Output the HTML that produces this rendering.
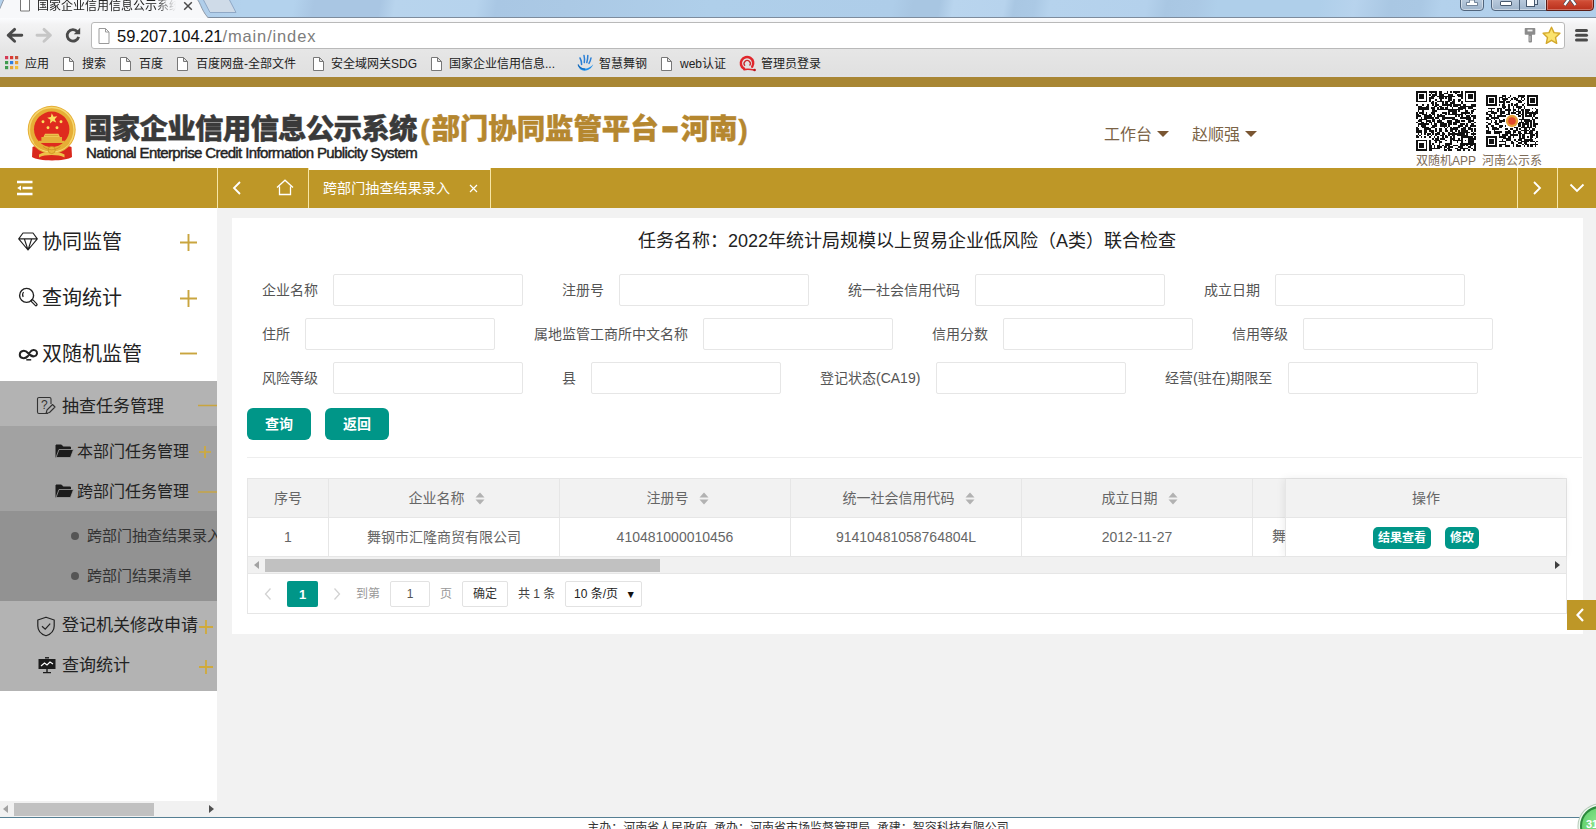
<!DOCTYPE html>
<html lang="zh-CN">
<head>
<meta charset="utf-8">
<title>国家企业信用信息公示系统</title>
<style>
*{box-sizing:border-box;margin:0;padding:0}
html,body{width:1596px;height:829px;overflow:hidden;background:#fff}
body{position:relative;font-family:"Liberation Sans","Noto Sans CJK SC",sans-serif;font-size:14px;color:#333}
.a{position:absolute;white-space:nowrap}
/* ---------- browser chrome ---------- */
#tabbar{left:0;top:0;width:1596px;height:18px;border-bottom:1px solid #7d8c9d;background:linear-gradient(100deg,#b4d1ec 0px,#b0ceea 200px,#b3d2ed 240px,#b3d2ed 290px,#a9c6e3 310px,#a9c6e3 375px,#b8d4ed 390px,#b6d3ed 470px,#a9c7e4 490px,#abc9e5 560px,#afcfea 700px,#aecde9 880px,#a8c6e2 900px,#a8c6e2 926px,#b9d5ee 940px,#b7d3ed 990px,#a9c7e3 1000px,#abc9e5 1020px,#b6d3ed 1035px,#b4d1ec 1130px,#a9c7e3 1150px,#abc9e5 1180px,#afcfea 1200px,#afcfea 1300px,#b7d3ed 1335px,#a9c7e3 1370px,#aac8e4 1400px,#b3d1ec 1420px,#b0ceea 1596px)}
#toolbar{left:0;top:18px;width:1596px;height:32px;background:linear-gradient(#fbfcfe 0%,#f3f3f4 20%,#e6e6e6 100%)}
#bmbar{left:0;top:50px;width:1596px;height:25px;background:linear-gradient(#e6e6e6,#e0e0e0)}
#bmline{left:0;top:75px;width:1596px;height:2px;background:#e1e1e4}
#urlbox{left:91px;top:22px;width:1474px;height:27px;background:#fff;border:1px solid #b9b9b9;border-radius:3px}
.bm{top:52px;height:25px;line-height:25px;font-size:12px;color:#222}
/* ---------- page ---------- */
#goldband{left:0;top:77px;width:1596px;height:10px;background:#a88634}
#header{left:0;top:87px;width:1596px;height:81px;background:#fff}
#nav{left:0;top:168px;width:1596px;height:40px;background:#be9727}
.sep{top:168px;width:1px;height:40px;background:#f7e6a5}
#side{left:0;top:208px;width:217px;height:609px;background:#fff}
#main{left:217px;top:208px;width:1379px;height:609px;background:#f2f2f2}
#card{left:232px;top:218px;width:1351px;height:416px;background:#fff}
.m1{left:42px;font-size:20px;color:#222;height:30px;line-height:30px}
.m2{font-size:17px;color:#222;height:26px;line-height:26px}
.m3{font-size:16px;color:#222;height:26px;line-height:26px}
.m4{font-size:15px;color:#333;height:24px;line-height:24px}
.plus{color:#c9a33c;font-weight:300}
.lbl{font-size:14px;color:#555;height:32px;line-height:32px}
.inp{width:190px;height:32px;border:1px solid #e6e6e6;border-radius:2px;background:#fff}
.btn{height:32px;line-height:32px;width:64px;text-align:center;background:#009688;color:#fff;font-size:14px;font-weight:bold;border-radius:6px}
.th{top:479px;height:39px;line-height:38px;text-align:center;color:#666;font-size:14px;background:#f2f2f2;border-right:1px solid #e6e6e6;border-bottom:1px solid #e6e6e6}
.td{top:518px;height:39px;line-height:39px;text-align:center;color:#666;font-size:14px;background:#fff;border-right:1px solid #e6e6e6;border-bottom:1px solid #e6e6e6;overflow:hidden}
.xs{top:527px;height:22px;line-height:22px;background:#009688;color:#fff;font-size:12px;font-weight:bold;border-radius:5px;text-align:center}
.pp{display:inline-block;font-style:normal;text-align:center;letter-spacing:0;font-family:"Liberation Sans",sans-serif;font-weight:bold}
.pg{top:581px;height:26px;line-height:27px;font-size:12px;color:#333}
</style>
</head>
<body>
<!-- ======= browser chrome ======= -->
<div class="a" id="tabbar"></div>
<div class="a" id="toolbar"></div>
<div class="a" id="bmbar"></div>
<div class="a" id="bmline"></div>
<div class="a" id="urlbox"></div>
<!-- active tab -->
<svg class="a" style="left:0;top:0" width="260" height="18" viewBox="0 0 260 18">
  <path d="M-6 22 L4 -1 L196 -1 C199.5 -1 201 10 207.5 17 L212 22 Z" fill="#f7f8fa" stroke="#8f9aa8" stroke-width="1"/>
  <path d="M203 -1 L229 -1 L236 12.5 L210 12.5 Z" fill="#cfdbe8" stroke="#8fa8c6" stroke-width="1"/>
</svg>
<svg class="a" style="left:19px;top:0" width="12" height="12" viewBox="0 0 12 12"><path d="M1.5 0 V11 H10.5 V0" fill="#fff" stroke="#777" stroke-width="1"/></svg>
<div class="a" style="left:37px;top:-3px;height:18px;line-height:18px;font-size:12px;color:#222;width:139px;overflow:hidden;-webkit-mask-image:linear-gradient(90deg,#000 85%,transparent)">国家企业信用信息公示系统</div>
<svg class="a" style="left:183px;top:1px" width="10" height="10" viewBox="0 0 10 10"><path d="M1.2 1.2 L8.8 8.8 M8.8 1.2 L1.2 8.8" stroke="#4a4a4a" stroke-width="1.5"/></svg>
<!-- window buttons -->
<div class="a" style="left:1460px;top:-6px;width:24px;height:17px;border:1px solid #51657d;border-radius:4px;background:linear-gradient(#c4d3e4,#9fb4cb);box-shadow:inset 0 0 0 1px rgba(255,255,255,.45)"></div>
<svg class="a" style="left:1465px;top:0" width="14" height="7" viewBox="0 0 14 7"><path d="M4.5 0 H9.5 V2.5 H12.5 V5.5 H1.5 V2.5 H4.5 Z" fill="#fff" stroke="#5c6f86" stroke-width=".8"/></svg>
<div class="a" style="left:1491px;top:-6px;width:56px;height:17px;border:1px solid #51657d;border-radius:0 0 0 4px;background:linear-gradient(#c4d3e4,#9fb4cb);box-shadow:inset 0 0 0 1px rgba(255,255,255,.45)"></div>
<div class="a" style="left:1519px;top:-6px;width:1px;height:17px;background:#51657d"></div>
<div class="a" style="left:1500px;top:1px;width:12px;height:5px;background:#fff;border:1px solid #46586e;border-radius:1px"></div>
<div class="a" style="left:1529px;top:-3px;width:9px;height:8px;background:#dfe8f2;border:1px solid #46586e"></div>
<div class="a" style="left:1526px;top:-1px;width:9px;height:8px;background:#fff;border:1.5px solid #46586e"></div>
<div class="a" style="left:1546px;top:-6px;width:48px;height:17px;border:1px solid #5a1d16;border-radius:0 0 4px 0;background:linear-gradient(#e08a76 0%,#cf4a33 45%,#b8301c 100%);box-shadow:inset 0 0 0 1px rgba(255,255,255,.3)"></div>
<svg class="a" style="left:1563px;top:-2px" width="14" height="8" viewBox="0 0 14 8"><path d="M1.5 7 L7 -0.5 L12.5 7 M4 -4 L7 -0.5 L10 -4" stroke="#3d4a5c" stroke-width="3.6" fill="none"/><path d="M1.5 7 L7 -0.5 L12.5 7 M4 -4 L7 -0.5 L10 -4" stroke="#fff" stroke-width="2.2" fill="none"/></svg>
<!-- toolbar -->
<svg class="a" style="left:5px;top:25px" width="22" height="20" viewBox="0 0 22 20"><path d="M3.5 10.3 H16.8 M3.2 10.3 L9.6 4.4 M3.2 10.3 L9.6 16.2" stroke="#4a4a4a" stroke-width="2.9" fill="none" stroke-linecap="round"/></svg>
<svg class="a" style="left:33px;top:25px" width="22" height="20" viewBox="0 0 22 20"><path d="M4 10.3 H17 M17.4 10.3 L11 4.4 M17.4 10.3 L11 16.2" stroke="#c6c6c6" stroke-width="2.9" fill="none" stroke-linecap="round"/></svg>
<svg class="a" style="left:63px;top:25px" width="20" height="20" viewBox="0 0 20 20"><path d="M14.4 6.6 A5.8 5.8 0 1 0 15.6 11.8" stroke="#4a4a4a" stroke-width="2.8" fill="none"/><path d="M10.8 9.2 H17.2 V2.8 Z" fill="#4a4a4a"/></svg>
<svg class="a" style="left:98px;top:28px" width="12" height="16" viewBox="0 0 12 16"><path d="M1 .5 H7.5 L11 4 V15.5 H1 Z" fill="#fff" stroke="#9a9a9a" stroke-width="1"/><path d="M7.5 .5 V4 H11" fill="none" stroke="#9a9a9a" stroke-width="1"/></svg>
<div class="a" style="left:117px;top:23px;height:26px;line-height:26px;font-size:16.5px;color:#111;letter-spacing:0px">59.207.104.21<span style="color:#7d7d7d;letter-spacing:0.85px">/main/index</span></div>
<svg class="a" style="left:1524px;top:27px" width="12" height="17" viewBox="0 0 12 17"><path d="M1.5 1 H10.5 A.8 .8 0 0 1 11.3 1.8 V7 A.8 .8 0 0 1 10.5 7.8 H8 V14.5 A1 1 0 0 1 7 15.5 H5.5 A1 1 0 0 1 4.5 14.5 V7.8 H1.5 A.8 .8 0 0 1 .7 7 V1.8 A.8 .8 0 0 1 1.5 1 Z" fill="#8c8c8c"/><path d="M3.5 2.6 H8.5 V4.4 H3.5Z" fill="#f2f2f2"/><path d="M6 9 V14" stroke="#c8c8c8" stroke-width="1"/></svg>
<svg class="a" style="left:1541px;top:25px" width="21" height="21" viewBox="0 0 21 21"><path d="M10.5 2.2 L13 7.6 L18.9 8.3 L14.5 12.4 L15.7 18.3 L10.5 15.3 L5.3 18.3 L6.5 12.4 L2.1 8.3 L8 7.6 Z" fill="#fbe36d" stroke="#d3a82b" stroke-width="1.4" stroke-linejoin="round"/></svg>
<div class="a" style="left:1575px;top:29px;width:13px;height:3.2px;border-radius:1.5px;background:#4a4a4a;box-shadow:0 4.8px 0 #4a4a4a,0 9.6px 0 #4a4a4a"></div>
<!-- bookmarks bar -->
<svg class="a" style="left:5px;top:56px" width="14" height="14" viewBox="0 0 14 14"><rect x="0" y="0" width="3.2" height="3.2" fill="#d43a55"/><rect x="5" y="0" width="3.2" height="3.2" fill="#dc3a32"/><rect x="10" y="0" width="3.2" height="3.2" fill="#c4503a"/><rect x="0" y="5" width="3.2" height="3.2" fill="#3f9a4e"/><rect x="5" y="5" width="3.2" height="3.2" fill="#2f7fe0"/><rect x="10" y="5" width="3.2" height="3.2" fill="#e79a2c"/><rect x="0" y="10" width="3.2" height="3.2" fill="#3f9a4e"/><rect x="5" y="10" width="3.2" height="3.2" fill="#e8a63a"/><rect x="10" y="10" width="3.2" height="3.2" fill="#f0c23c"/></svg>
<div class="a bm" style="left:25px">应用</div>
<svg class="a pgi" style="margin-top:1px;left:63px;top:56px" width="11" height="14" viewBox="0 0 11 14"><path d="M.5 .5 H6.5 L10.5 4.5 V13.5 H.5 Z M6.5 .5 V4.5 H10.5" fill="#fff" stroke="#777" stroke-width="1"/></svg>
<div class="a bm" style="left:82px">搜索</div>
<svg class="a pgi" style="margin-top:1px;left:120px;top:56px" width="11" height="14" viewBox="0 0 11 14"><path d="M.5 .5 H6.5 L10.5 4.5 V13.5 H.5 Z M6.5 .5 V4.5 H10.5" fill="#fff" stroke="#777" stroke-width="1"/></svg>
<div class="a bm" style="left:139px">百度</div>
<svg class="a pgi" style="margin-top:1px;left:177px;top:56px" width="11" height="14" viewBox="0 0 11 14"><path d="M.5 .5 H6.5 L10.5 4.5 V13.5 H.5 Z M6.5 .5 V4.5 H10.5" fill="#fff" stroke="#777" stroke-width="1"/></svg>
<div class="a bm" style="left:196px">百度网盘-全部文件</div>
<svg class="a pgi" style="margin-top:1px;left:313px;top:56px" width="11" height="14" viewBox="0 0 11 14"><path d="M.5 .5 H6.5 L10.5 4.5 V13.5 H.5 Z M6.5 .5 V4.5 H10.5" fill="#fff" stroke="#777" stroke-width="1"/></svg>
<div class="a bm" style="left:331px">安全域网关SDG</div>
<svg class="a pgi" style="margin-top:1px;left:431px;top:56px" width="11" height="14" viewBox="0 0 11 14"><path d="M.5 .5 H6.5 L10.5 4.5 V13.5 H.5 Z M6.5 .5 V4.5 H10.5" fill="#fff" stroke="#777" stroke-width="1"/></svg>
<div class="a bm" style="left:449px">国家企业信用信息...</div>
<svg class="a" style="left:577px;top:54px" width="18" height="18" viewBox="0 0 18 18"><path d="M1 10.5 C3 15.5 11 16.5 16.3 10.2 C13 18.5 2 19 1 10.5Z" fill="#1d8eea"/><path d="M1 10.5 C2.5 14 5 15 8 15.2" stroke="#1568b8" stroke-width="1.2" fill="none"/><path d="M3 4 C4.2 6 4.6 8 4.6 10.4 M7 1.4 C7.6 3.6 7.6 6 7.3 8.6 M10.8 1.4 C10.8 4 10.4 6.4 9.8 8.6 M14 4 C13.6 6.4 12.8 8 12 9.4" stroke="#2a7fd6" stroke-width="1.5" fill="none" stroke-linecap="round"/></svg>
<div class="a bm" style="left:599px">智慧舞钢</div>
<svg class="a pgi" style="margin-top:1px;left:661px;top:56px" width="11" height="14" viewBox="0 0 11 14"><path d="M.5 .5 H6.5 L10.5 4.5 V13.5 H.5 Z M6.5 .5 V4.5 H10.5" fill="#fff" stroke="#777" stroke-width="1"/></svg>
<div class="a bm" style="left:680px">web认证</div>
<svg class="a" style="left:739px;top:54px" width="18" height="18" viewBox="0 0 18 18"><path d="M13.2 12.6 A6.2 6.2 0 1 0 5 14.6" fill="none" stroke="#e0262c" stroke-width="2.5" stroke-linecap="round"/><path d="M10.6 11.6 A3.1 3.1 0 1 0 6 11.8" fill="none" stroke="#c92a2e" stroke-width="1.3"/><path d="M5 15.6 C8 15 12 15.3 15.4 16" stroke="#e0262c" stroke-width="1.6" fill="none" stroke-linecap="round"/><circle cx="15.6" cy="16" r="1.3" fill="#b8161c"/></svg>
<div class="a bm" style="left:761px">管理员登录</div>
<!--CHROME-END-->

<!-- ======= page ======= -->
<div class="a" id="goldband"></div>
<div class="a" id="header"></div>
<!--HEADER-->
<!-- emblem -->
<svg class="a" style="left:22px;top:102px" width="60" height="62" viewBox="0 0 60 62">
  <path d="M10.5 45 C16 41.5 43 41.5 49.5 45 L50 55 C44 59.5 16 59.5 10 55 Z" fill="#d9281c"/>
  <circle cx="29.7" cy="27.8" r="24" fill="#e6ae36"/>
  <circle cx="29.7" cy="27.8" r="22.3" fill="none" stroke="#f5d76e" stroke-width="1.4"/>
  <circle cx="29.7" cy="27.3" r="17.7" fill="#df2b1e"/>
  <path d="M12 37 C18 48 41 48 47.4 37 L47.4 41 C41 52 18 52 12 41 Z" fill="#e6ae36"/>
  <path d="M16.8 41 H42.6 V38.7 H40 V35 H19.4 V38.7 H16.8 Z" fill="#e5b03a"/>
  <path d="M21.5 35 H37.9 L36.4 31.8 H23 Z" fill="#efc552"/>
  <path d="M23 33.4 H36.4" stroke="#c98c1e" stroke-width=".6"/>
  <g transform="rotate(-8 30.5 16.8)"><path d="M30.5 11.3 l1.35 3.5 3.75.25 -2.9 2.4 .95 3.65 -3.15-2 -3.15 2 .95-3.65 -2.9-2.4 3.75-.25z" fill="#fbe060"/></g>
  <circle cx="21" cy="19.8" r="1.45" fill="#fbe060"/><circle cx="39" cy="19.8" r="1.45" fill="#fbe060"/>
  <circle cx="26" cy="25.8" r="1.45" fill="#fbe060"/><circle cx="35" cy="25.8" r="1.45" fill="#fbe060"/>
  <path d="M17 52.5 C23 48.5 36 48.5 42.5 52.5 L42.5 55.5 C36 52.3 23 52.3 17 55.5 Z" fill="#edc148"/>
  <circle cx="29.7" cy="48" r="3.6" fill="#e9b63a" stroke="#c98c1e" stroke-width=".7"/>
  <path d="M21 44.5 C24 47 27 47.5 29.7 47.8 C32.5 47.5 35.5 47 38.5 44.5" stroke="#c98c1e" stroke-width=".7" fill="none"/>
</svg>
<div class="a" id="ttl" style="left:84px;top:109px;height:40px;line-height:40px;font-size:28.5px;font-weight:900;color:#3a3a3a;letter-spacing:-0.77px;-webkit-text-stroke:0.4px currentColor;font-family:'Liberation Sans','Noto Sans CJK SC',sans-serif">国家企业信用信息公示系统<span style="color:#b5872f;letter-spacing:-0.1px;margin-left:1.7px"><i class="pp" style="width:13px">(</i>部门协同监管平台<i class="pp" style="width:22px;transform:translateY(1px) scale(1.05,1.9);transform-origin:50% 64%">–</i>河南<i class="pp" style="width:11px">)</i></span></div>
<div class="a" id="eng" style="left:86px;top:144px;height:18px;line-height:18px;font-size:15px;color:#222;letter-spacing:-0.62px;-webkit-text-stroke:0.45px #222">National Enterprise Credit Information Publicity System</div>
<!-- right nav -->
<div class="a" style="left:1104px;top:122.5px;height:24px;line-height:24px;font-size:16px;color:#7b6346">工作台</div>
<div class="a" style="left:1157px;top:131px;width:0;height:0;border-left:6px solid transparent;border-right:6px solid transparent;border-top:6px solid #7a5632"></div>
<div class="a" style="left:1192px;top:122.5px;height:24px;line-height:24px;font-size:16px;color:#7b6346">赵顺强</div>
<div class="a" style="left:1245px;top:131px;width:0;height:0;border-left:6px solid transparent;border-right:6px solid transparent;border-top:6px solid #7a5632"></div>
<!-- QR codes -->
<svg class="a" style="left:1416px;top:91px" width="60" height="60" viewBox="0 0 37 37" shape-rendering="crispEdges"><rect width="37" height="37" fill="#fff"/><path fill="#111" d="M0 0h7v1h-7zM8 0h5v1h-5zM14 0h2v1h-2zM19 0h1v1h-1zM21 0h1v1h-1zM23 0h4v1h-4zM28 0h1v1h-1zM30 0h7v1h-7zM0 1h1v1h-1zM6 1h1v1h-1zM9 1h1v1h-1zM12 1h1v1h-1zM14 1h2v1h-2zM17 1h3v1h-3zM24 1h1v1h-1zM28 1h1v1h-1zM30 1h1v1h-1zM36 1h1v1h-1zM0 2h1v1h-1zM2 2h3v1h-3zM6 2h1v1h-1zM8 2h1v1h-1zM10 2h3v1h-3zM14 2h3v1h-3zM20 2h3v1h-3zM25 2h4v1h-4zM30 2h1v1h-1zM32 2h3v1h-3zM36 2h1v1h-1zM0 3h1v1h-1zM2 3h3v1h-3zM6 3h1v1h-1zM9 3h3v1h-3zM13 3h11v1h-11zM26 3h3v1h-3zM30 3h1v1h-1zM32 3h3v1h-3zM36 3h1v1h-1zM0 4h1v1h-1zM2 4h3v1h-3zM6 4h1v1h-1zM8 4h3v1h-3zM14 4h3v1h-3zM18 4h1v1h-1zM20 4h2v1h-2zM28 4h1v1h-1zM30 4h1v1h-1zM32 4h3v1h-3zM36 4h1v1h-1zM0 5h1v1h-1zM6 5h1v1h-1zM8 5h1v1h-1zM12 5h1v1h-1zM15 5h1v1h-1zM20 5h2v1h-2zM23 5h1v1h-1zM26 5h2v1h-2zM30 5h1v1h-1zM36 5h1v1h-1zM0 6h7v1h-7zM8 6h1v1h-1zM10 6h1v1h-1zM13 6h4v1h-4zM18 6h3v1h-3zM22 6h2v1h-2zM26 6h1v1h-1zM28 6h1v1h-1zM30 6h7v1h-7zM9 7h2v1h-2zM12 7h1v1h-1zM16 7h1v1h-1zM18 7h2v1h-2zM21 7h3v1h-3zM28 7h1v1h-1zM0 8h1v1h-1zM4 8h1v1h-1zM7 8h1v1h-1zM10 8h1v1h-1zM12 8h2v1h-2zM16 8h6v1h-6zM23 8h5v1h-5zM29 8h2v1h-2zM34 8h3v1h-3zM1 9h3v1h-3zM6 9h2v1h-2zM11 9h2v1h-2zM14 9h2v1h-2zM19 9h1v1h-1zM21 9h1v1h-1zM23 9h3v1h-3zM27 9h10v1h-10zM1 10h7v1h-7zM9 10h3v1h-3zM13 10h1v1h-1zM15 10h2v1h-2zM18 10h2v1h-2zM22 10h1v1h-1zM26 10h5v1h-5zM32 10h3v1h-3zM1 11h7v1h-7zM10 11h2v1h-2zM13 11h16v1h-16zM30 11h1v1h-1zM35 11h2v1h-2zM1 12h1v1h-1zM4 12h1v1h-1zM10 12h3v1h-3zM20 12h5v1h-5zM26 12h1v1h-1zM30 12h2v1h-2zM34 12h2v1h-2zM0 13h1v1h-1zM2 13h3v1h-3zM6 13h1v1h-1zM9 13h3v1h-3zM16 13h3v1h-3zM20 13h1v1h-1zM22 13h3v1h-3zM28 13h5v1h-5zM34 13h1v1h-1zM0 14h2v1h-2zM4 14h3v1h-3zM8 14h1v1h-1zM10 14h2v1h-2zM13 14h1v1h-1zM15 14h1v1h-1zM18 14h1v1h-1zM20 14h9v1h-9zM30 14h1v1h-1zM33 14h1v1h-1zM0 15h3v1h-3zM5 15h5v1h-5zM11 15h1v1h-1zM13 15h5v1h-5zM24 15h1v1h-1zM26 15h1v1h-1zM28 15h1v1h-1zM31 15h2v1h-2zM34 15h3v1h-3zM0 16h1v1h-1zM3 16h1v1h-1zM5 16h6v1h-6zM12 16h2v1h-2zM16 16h8v1h-8zM27 16h7v1h-7zM35 16h2v1h-2zM2 17h5v1h-5zM10 17h2v1h-2zM14 17h1v1h-1zM16 17h2v1h-2zM22 17h4v1h-4zM31 17h3v1h-3zM35 17h1v1h-1zM1 18h3v1h-3zM6 18h3v1h-3zM10 18h2v1h-2zM13 18h3v1h-3zM19 18h3v1h-3zM24 18h3v1h-3zM28 18h2v1h-2zM32 18h4v1h-4zM0 19h1v1h-1zM3 19h2v1h-2zM6 19h1v1h-1zM8 19h2v1h-2zM11 19h1v1h-1zM13 19h4v1h-4zM19 19h3v1h-3zM23 19h4v1h-4zM32 19h2v1h-2zM36 19h1v1h-1zM1 20h7v1h-7zM9 20h1v1h-1zM11 20h2v1h-2zM15 20h4v1h-4zM20 20h2v1h-2zM23 20h2v1h-2zM27 20h3v1h-3zM31 20h1v1h-1zM34 20h2v1h-2zM1 21h1v1h-1zM3 21h3v1h-3zM10 21h3v1h-3zM15 21h4v1h-4zM20 21h1v1h-1zM26 21h3v1h-3zM30 21h2v1h-2zM33 21h4v1h-4zM0 22h1v1h-1zM4 22h4v1h-4zM9 22h3v1h-3zM17 22h1v1h-1zM19 22h1v1h-1zM21 22h1v1h-1zM23 22h4v1h-4zM29 22h2v1h-2zM32 22h2v1h-2zM0 23h2v1h-2zM5 23h4v1h-4zM12 23h1v1h-1zM14 23h2v1h-2zM18 23h1v1h-1zM21 23h5v1h-5zM28 23h3v1h-3zM32 23h3v1h-3zM36 23h1v1h-1zM0 24h4v1h-4zM5 24h2v1h-2zM8 24h3v1h-3zM12 24h1v1h-1zM14 24h2v1h-2zM18 24h2v1h-2zM21 24h2v1h-2zM24 24h1v1h-1zM26 24h1v1h-1zM28 24h4v1h-4zM34 24h1v1h-1zM36 24h1v1h-1zM0 25h4v1h-4zM5 25h2v1h-2zM9 25h2v1h-2zM13 25h2v1h-2zM16 25h1v1h-1zM20 25h1v1h-1zM22 25h2v1h-2zM26 25h7v1h-7zM35 25h1v1h-1zM1 26h1v1h-1zM3 26h1v1h-1zM5 26h1v1h-1zM7 26h2v1h-2zM10 26h1v1h-1zM12 26h3v1h-3zM16 26h2v1h-2zM20 26h10v1h-10zM31 26h1v1h-1zM34 26h3v1h-3zM0 27h1v1h-1zM2 27h1v1h-1zM7 27h1v1h-1zM9 27h1v1h-1zM12 27h1v1h-1zM15 27h2v1h-2zM18 27h1v1h-1zM20 27h1v1h-1zM22 27h2v1h-2zM25 27h7v1h-7zM35 27h1v1h-1zM0 28h2v1h-2zM3 28h1v1h-1zM5 28h1v1h-1zM8 28h1v1h-1zM11 28h1v1h-1zM13 28h1v1h-1zM16 28h1v1h-1zM18 28h2v1h-2zM21 28h1v1h-1zM23 28h1v1h-1zM28 28h7v1h-7zM36 28h1v1h-1zM10 29h1v1h-1zM12 29h2v1h-2zM15 29h3v1h-3zM21 29h3v1h-3zM26 29h1v1h-1zM28 29h1v1h-1zM32 29h5v1h-5zM0 30h7v1h-7zM8 30h1v1h-1zM11 30h4v1h-4zM18 30h1v1h-1zM21 30h1v1h-1zM23 30h6v1h-6zM30 30h1v1h-1zM32 30h4v1h-4zM0 31h1v1h-1zM6 31h1v1h-1zM8 31h1v1h-1zM12 31h1v1h-1zM14 31h2v1h-2zM21 31h1v1h-1zM25 31h1v1h-1zM28 31h1v1h-1zM32 31h4v1h-4zM0 32h1v1h-1zM2 32h3v1h-3zM6 32h1v1h-1zM8 32h1v1h-1zM10 32h1v1h-1zM14 32h1v1h-1zM18 32h4v1h-4zM27 32h10v1h-10zM0 33h1v1h-1zM2 33h3v1h-3zM6 33h1v1h-1zM8 33h2v1h-2zM11 33h1v1h-1zM13 33h2v1h-2zM16 33h1v1h-1zM18 33h3v1h-3zM23 33h3v1h-3zM27 33h3v1h-3zM31 33h1v1h-1zM33 33h2v1h-2zM36 33h1v1h-1zM0 34h1v1h-1zM2 34h3v1h-3zM6 34h1v1h-1zM8 34h2v1h-2zM11 34h1v1h-1zM13 34h3v1h-3zM17 34h2v1h-2zM20 34h3v1h-3zM26 34h3v1h-3zM32 34h2v1h-2zM36 34h1v1h-1zM0 35h1v1h-1zM6 35h1v1h-1zM8 35h7v1h-7zM17 35h1v1h-1zM19 35h2v1h-2zM24 35h2v1h-2zM27 35h5v1h-5zM34 35h1v1h-1zM36 35h1v1h-1zM0 36h7v1h-7zM8 36h2v1h-2zM17 36h2v1h-2zM20 36h2v1h-2zM25 36h3v1h-3zM29 36h1v1h-1zM32 36h1v1h-1zM35 36h2v1h-2z"/></svg>
<svg class="a" style="left:1486px;top:95px" width="52" height="52" viewBox="0 0 33 33"><rect width="33" height="33" fill="#fff"/><path fill="#111" shape-rendering="crispEdges" d="M0 0h7v1h-7zM10 0h3v1h-3zM15 0h1v1h-1zM20 0h5v1h-5zM26 0h7v1h-7zM0 1h1v1h-1zM6 1h1v1h-1zM8 1h3v1h-3zM12 1h1v1h-1zM14 1h1v1h-1zM17 1h2v1h-2zM20 1h1v1h-1zM22 1h2v1h-2zM26 1h1v1h-1zM32 1h1v1h-1zM0 2h1v1h-1zM2 2h3v1h-3zM6 2h1v1h-1zM8 2h1v1h-1zM10 2h4v1h-4zM16 2h1v1h-1zM18 2h2v1h-2zM22 2h1v1h-1zM24 2h1v1h-1zM26 2h1v1h-1zM28 2h3v1h-3zM32 2h1v1h-1zM0 3h1v1h-1zM2 3h3v1h-3zM6 3h1v1h-1zM8 3h1v1h-1zM11 3h2v1h-2zM15 3h1v1h-1zM19 3h3v1h-3zM23 3h1v1h-1zM26 3h1v1h-1zM28 3h3v1h-3zM32 3h1v1h-1zM0 4h1v1h-1zM2 4h3v1h-3zM6 4h1v1h-1zM8 4h4v1h-4zM13 4h2v1h-2zM20 4h3v1h-3zM26 4h1v1h-1zM28 4h3v1h-3zM32 4h1v1h-1zM0 5h1v1h-1zM6 5h1v1h-1zM11 5h1v1h-1zM16 5h1v1h-1zM19 5h1v1h-1zM24 5h1v1h-1zM26 5h1v1h-1zM32 5h1v1h-1zM0 6h7v1h-7zM8 6h1v1h-1zM10 6h2v1h-2zM14 6h1v1h-1zM16 6h1v1h-1zM18 6h2v1h-2zM23 6h1v1h-1zM26 6h7v1h-7zM10 7h3v1h-3zM14 7h1v1h-1zM17 7h1v1h-1zM19 7h4v1h-4zM24 7h1v1h-1zM1 8h5v1h-5zM7 8h3v1h-3zM11 8h1v1h-1zM14 8h1v1h-1zM17 8h1v1h-1zM20 8h2v1h-2zM24 8h1v1h-1zM29 8h1v1h-1zM31 8h1v1h-1zM3 9h1v1h-1zM7 9h1v1h-1zM9 9h1v1h-1zM12 9h4v1h-4zM17 9h2v1h-2zM20 9h1v1h-1zM22 9h2v1h-2zM25 9h3v1h-3zM32 9h1v1h-1zM1 10h4v1h-4zM7 10h1v1h-1zM9 10h3v1h-3zM14 10h1v1h-1zM17 10h1v1h-1zM19 10h3v1h-3zM23 10h1v1h-1zM25 10h2v1h-2zM29 10h1v1h-1zM31 10h2v1h-2zM0 11h1v1h-1zM3 11h4v1h-4zM9 11h3v1h-3zM14 11h1v1h-1zM16 11h3v1h-3zM20 11h2v1h-2zM23 11h1v1h-1zM25 11h8v1h-8zM0 12h3v1h-3zM5 12h1v1h-1zM9 12h1v1h-1zM13 12h2v1h-2zM19 12h2v1h-2zM22 12h2v1h-2zM25 12h1v1h-1zM27 12h2v1h-2zM30 12h2v1h-2zM2 13h2v1h-2zM5 13h1v1h-1zM7 13h6v1h-6zM20 13h2v1h-2zM23 13h1v1h-1zM25 13h4v1h-4zM30 13h1v1h-1zM0 14h2v1h-2zM3 14h5v1h-5zM23 14h1v1h-1zM29 14h1v1h-1zM31 14h2v1h-2zM0 15h3v1h-3zM5 15h1v1h-1zM8 15h1v1h-1zM11 15h1v1h-1zM21 15h7v1h-7zM29 15h2v1h-2zM3 16h1v1h-1zM6 16h1v1h-1zM8 16h4v1h-4zM22 16h1v1h-1zM24 16h5v1h-5zM30 16h1v1h-1zM0 17h1v1h-1zM3 17h1v1h-1zM5 17h2v1h-2zM8 17h2v1h-2zM21 17h3v1h-3zM25 17h2v1h-2zM28 17h1v1h-1zM30 17h1v1h-1zM1 18h2v1h-2zM6 18h2v1h-2zM20 18h2v1h-2zM23 18h4v1h-4zM28 18h1v1h-1zM30 18h3v1h-3zM0 19h1v1h-1zM3 19h2v1h-2zM8 19h3v1h-3zM12 19h1v1h-1zM20 19h2v1h-2zM23 19h2v1h-2zM26 19h1v1h-1zM28 19h1v1h-1zM30 19h2v1h-2zM0 20h2v1h-2zM4 20h3v1h-3zM8 20h2v1h-2zM18 20h2v1h-2zM22 20h7v1h-7zM31 20h1v1h-1zM1 21h1v1h-1zM4 21h4v1h-4zM12 21h2v1h-2zM15 21h2v1h-2zM19 21h1v1h-1zM21 21h1v1h-1zM24 21h2v1h-2zM27 21h1v1h-1zM29 21h2v1h-2zM0 22h2v1h-2zM5 22h1v1h-1zM14 22h1v1h-1zM17 22h3v1h-3zM22 22h5v1h-5zM28 22h3v1h-3zM0 23h3v1h-3zM5 23h5v1h-5zM12 23h4v1h-4zM17 23h2v1h-2zM20 23h2v1h-2zM24 23h2v1h-2zM27 23h3v1h-3zM32 23h1v1h-1zM0 24h3v1h-3zM5 24h4v1h-4zM12 24h4v1h-4zM17 24h1v1h-1zM20 24h3v1h-3zM24 24h6v1h-6zM31 24h2v1h-2zM8 25h1v1h-1zM10 25h4v1h-4zM15 25h5v1h-5zM21 25h1v1h-1zM23 25h2v1h-2zM28 25h3v1h-3zM32 25h1v1h-1zM0 26h7v1h-7zM8 26h5v1h-5zM14 26h2v1h-2zM17 26h1v1h-1zM21 26h1v1h-1zM23 26h2v1h-2zM26 26h1v1h-1zM28 26h2v1h-2zM32 26h1v1h-1zM0 27h1v1h-1zM6 27h1v1h-1zM11 27h5v1h-5zM21 27h4v1h-4zM28 27h1v1h-1zM31 27h1v1h-1zM0 28h1v1h-1zM2 28h3v1h-3zM6 28h1v1h-1zM10 28h1v1h-1zM13 28h3v1h-3zM18 28h1v1h-1zM20 28h3v1h-3zM24 28h6v1h-6zM0 29h1v1h-1zM2 29h3v1h-3zM6 29h1v1h-1zM8 29h5v1h-5zM16 29h1v1h-1zM19 29h1v1h-1zM22 29h5v1h-5zM28 29h3v1h-3zM32 29h1v1h-1zM0 30h1v1h-1zM2 30h3v1h-3zM6 30h1v1h-1zM12 30h1v1h-1zM16 30h2v1h-2zM20 30h3v1h-3zM24 30h2v1h-2zM31 30h1v1h-1zM0 31h1v1h-1zM6 31h1v1h-1zM8 31h5v1h-5zM17 31h1v1h-1zM19 31h1v1h-1zM23 31h1v1h-1zM25 31h2v1h-2zM28 31h5v1h-5zM0 32h7v1h-7zM8 32h2v1h-2zM12 32h3v1h-3zM17 32h1v1h-1zM19 32h3v1h-3zM24 32h1v1h-1zM26 32h1v1h-1zM28 32h2v1h-2zM31 32h1v1h-1z"/><circle cx="16.5" cy="16.5" r="3.9" fill="#e8a33a"/><circle cx="16.5" cy="16.5" r="2.4" fill="#e0482c"/></svg>
<div class="a" style="left:1416px;top:153px;height:16px;line-height:16px;font-size:12px;color:#7d6b58;width:60px;overflow:hidden">双随机APP</div>
<div class="a" style="left:1482px;top:153px;height:16px;line-height:16px;font-size:12px;color:#7d6b58;width:60px;overflow:hidden">河南公示系统</div>
<!--HEADER-END-->
<div class="a" id="nav"></div>
<!--NAV-->
<div class="a sep" style="left:217px"></div>
<div class="a sep" style="left:308px"></div>
<div class="a sep" style="left:490px"></div>
<div class="a" style="left:309px;top:168px;width:181px;height:2px;background:#fff"></div>
<div class="a sep" style="left:1517px"></div>
<div class="a sep" style="left:1557px"></div>
<!-- menu fold icon -->
<svg class="a" style="left:16px;top:180px" width="18" height="16" viewBox="0 0 18 16"><path d="M1 2 H16.5 M6.5 8 H16.5 M1 14 H16.5" stroke="#fff" stroke-width="2.4"/><path d="M1.2 8 L5 5.6 V10.4 Z" fill="#fff"/></svg>
<svg class="a" style="left:231px;top:180px" width="12" height="16" viewBox="0 0 12 16"><path d="M9 2 L3 8 L9 14" stroke="#fff" stroke-width="1.8" fill="none"/></svg>
<svg class="a" style="left:276px;top:179px" width="18" height="17" viewBox="0 0 18 17"><path d="M1 8.5 L9 1.2 L17 8.5 M3.5 7.5 V15.5 H14.5 V7.5" stroke="#fff" stroke-width="1.3" fill="none"/></svg>
<div class="a" style="left:323px;top:176px;height:24px;line-height:24px;font-size:14px;color:#fff;letter-spacing:0.12px">跨部门抽查结果录入</div>
<svg class="a" style="left:469px;top:184px" width="9" height="9" viewBox="0 0 9 9"><path d="M1 1 L8 8 M8 1 L1 8" stroke="#fff" stroke-width="1.2"/></svg>
<svg class="a" style="left:1531px;top:180px" width="12" height="16" viewBox="0 0 12 16"><path d="M3 2 L9 8 L3 14" stroke="#fff" stroke-width="1.8" fill="none"/></svg>
<svg class="a" style="left:1569px;top:182px" width="16" height="12" viewBox="0 0 16 12"><path d="M1.5 2.5 L8 9 L14.5 2.5" stroke="#fff" stroke-width="1.8" fill="none"/></svg>
<!--NAV-END-->
<div class="a" id="side"></div>
<!--SIDE-->
<div class="a" style="left:0;top:381px;width:217px;height:310px;background:#b3b3b3"></div>
<div class="a" style="left:0;top:426px;width:217px;height:175px;background:#a2a2a2"></div>
<div class="a" style="left:0;top:511px;width:217px;height:90px;background:#929292"></div>
<!-- level 1 -->
<svg class="a" style="left:18px;top:232px" width="20" height="19" viewBox="0 0 20 19"><path d="M5 1 H15 L19.3 6.8 L10 18 L.7 6.8 Z M.7 6.8 H19.3 M6.3 6.8 L10 18 L13.7 6.8" fill="none" stroke="#222" stroke-width="1.15" stroke-linejoin="round"/></svg>
<div class="a m1" style="top:227px">协同监管</div>
<svg class="a" style="left:180px;top:234px" width="17" height="17" viewBox="0 0 17 17"><path d="M0 8.5 H17 M8.5 0 V17" stroke="#c9a53f" stroke-width="1.9"/></svg>
<svg class="a" style="left:18px;top:287px" width="21" height="21" viewBox="0 0 21 21"><circle cx="8.6" cy="8.4" r="7" fill="none" stroke="#222" stroke-width="1.4"/><path d="M5.6 5 A4.4 4.4 0 0 0 5.2 10" fill="none" stroke="#222" stroke-width="1.1"/><path d="M14.2 13.8 L18 17.6" stroke="#222" stroke-width="3.4" stroke-linecap="round"/><path d="M14.6 14.2 L17.8 17.4" stroke="#fff" stroke-width="1.1" stroke-linecap="round"/></svg>
<div class="a m1" style="top:283px">查询统计</div>
<svg class="a" style="left:180px;top:290px" width="17" height="17" viewBox="0 0 17 17"><path d="M0 8.5 H17 M8.5 0 V17" stroke="#c9a53f" stroke-width="1.9"/></svg>
<svg class="a" style="left:18px;top:346px" width="21" height="16" viewBox="0 0 21 16"><path d="M10 10 C7 13.5 1.5 12.5 1.8 8.5 C2 4.5 7 3.5 10 7 C12.5 10 15 11.5 18 9.5 C20 7.5 19 3.8 15.5 4 C13.5 4.2 12.5 5.5 11.8 6.5" fill="none" stroke="#222" stroke-width="2" stroke-linecap="round"/><path d="M8.3 13.8 H13.2" stroke="#222" stroke-width="1.5"/></svg>
<div class="a m1" style="top:339px">双随机监管</div>
<svg class="a" style="left:180px;top:345px" width="17" height="17" viewBox="0 0 17 17"><path d="M0 8.5 H17" stroke="#c9a53f" stroke-width="1.9"/></svg>
<!-- level 2 -->
<svg class="a" style="left:36px;top:396px" width="20" height="19" viewBox="0 0 20 19"><path d="M12 17.5 H3 A1.5 1.5 0 0 1 1.5 16 V3 A1.5 1.5 0 0 1 3 1.5 H13.5 A1.5 1.5 0 0 1 15 3 V8" fill="none" stroke="#333" stroke-width="1.1"/><path d="M10 17.5 L11 14 L16.5 8.5 L19 11 L13.5 16.5 Z" fill="#b3b3b3" stroke="#333" stroke-width="1.1" stroke-linejoin="round"/></svg>
<div class="a" style="left:41px;top:396px;height:18px;line-height:18px;font-size:12px;color:#333">?</div>
<div class="a m2" style="left:62px;top:393.5px">抽查任务管理</div>
<svg class="a" style="left:198px;top:398px" width="19" height="14" viewBox="0 0 19 14"><path d="M0 7.5 H19" stroke="#c9a53f" stroke-width="1.5"/></svg>
<svg class="a" style="left:36px;top:616px" width="20" height="21" viewBox="0 0 20 21"><path d="M10 1.2 L18.2 4 V10 C18.2 15 14.5 18.3 10 19.8 C5.5 18.3 1.8 15 1.8 10 V4 Z" fill="none" stroke="#222" stroke-width="1.2" stroke-linejoin="round"/><path d="M6 10.2 L9.2 13.2 L14.2 7.6" fill="none" stroke="#222" stroke-width="1.2"/></svg>
<div class="a m2" style="left:62px;top:613px">登记机关修改申请</div>
<svg class="a" style="left:199px;top:620px" width="14" height="14" viewBox="0 0 14 14"><path d="M0 7 H14 M7 0 V14" stroke="#d0aa3a" stroke-width="1.8"/></svg>
<svg class="a" style="left:38px;top:657px" width="18" height="17" viewBox="0 0 18 17"><path d="M.5 2 H17.5 V12 H.5 Z" fill="#1c1c1c"/><path d="M3 9 L6.5 6 L9 8 L12 5 L15 7" stroke="#fff" stroke-width="1.1" fill="none"/><path d="M9 12 V15 M5 15.6 H13" stroke="#1c1c1c" stroke-width="1.4"/><path d="M7 0.8 H11" stroke="#1c1c1c" stroke-width="1.4"/></svg>
<div class="a m2" style="left:62px;top:653px">查询统计</div>
<svg class="a" style="left:199px;top:660px" width="14" height="14" viewBox="0 0 14 14"><path d="M0 7 H14 M7 0 V14" stroke="#d0aa3a" stroke-width="1.8"/></svg>
<!-- level 3 -->
<svg class="a" style="left:55px;top:443px" width="19" height="16" viewBox="0 0 19 16"><path d="M1 14.5 V2 H6.5 L8 4 H15.5 V6.5" fill="#1c1c1c" stroke="#1c1c1c" stroke-width="1"/><path d="M1 14.5 L4 6.5 H18.5 L15.5 14.5 Z" fill="#1c1c1c" stroke="#a2a2a2" stroke-width=".8"/></svg>
<div class="a m3" style="left:77px;top:439px">本部门任务管理</div>
<svg class="a" style="left:199px;top:446px" width="12" height="12" viewBox="0 0 12 12"><path d="M0 6 H12 M6 0 V12" stroke="#d0aa3a" stroke-width="1.7"/></svg>
<svg class="a" style="left:55px;top:483px" width="19" height="16" viewBox="0 0 19 16"><path d="M1 14.5 V2 H6.5 L8 4 H15.5 V6.5" fill="#1c1c1c" stroke="#1c1c1c" stroke-width="1"/><path d="M1 14.5 L4 6.5 H18.5 L15.5 14.5 Z" fill="#1c1c1c" stroke="#a2a2a2" stroke-width=".8"/></svg>
<div class="a m3" style="left:77px;top:479px">跨部门任务管理</div>
<svg class="a" style="left:198px;top:485px" width="19" height="14" viewBox="0 0 19 14"><path d="M0 7 H19" stroke="#c9a53f" stroke-width="1.4"/></svg>
<!-- level 4 -->
<div class="a" style="left:71px;top:532px;width:8px;height:8px;border-radius:50%;background:#555"></div>
<div class="a m4" style="left:87px;top:524px;width:130px;overflow:hidden">跨部门抽查结果录入</div>
<div class="a" style="left:71px;top:572px;width:8px;height:8px;border-radius:50%;background:#555"></div>
<div class="a m4" style="left:87px;top:564px">跨部门结果清单</div>
<!-- sidebar scrollbar -->
<div class="a" style="left:0;top:801px;width:217px;height:16px;background:#f1f1f1"></div>
<div class="a" style="left:14px;top:803px;width:140px;height:13px;background:#c1c1c1"></div>
<div class="a" style="left:3px;top:805px;width:0;height:0;border-top:4.5px solid transparent;border-bottom:4.5px solid transparent;border-right:5px solid #a3a3a3"></div>
<div class="a" style="left:209px;top:805px;width:0;height:0;border-top:4.5px solid transparent;border-bottom:4.5px solid transparent;border-left:5px solid #505050"></div>
<!--SIDE-END-->
<div class="a" id="main"></div>
<div class="a" id="card"></div>
<!--CARD--><div class="a" id="task" style="left:232px;top:227px;width:1350px;height:28px;line-height:28px;text-align:center;font-size:18px;color:#222">任务名称：2022年统计局规模以上贸易企业低风险（A类）联合检查</div>
<div class="a lbl" style="left:262px;top:274px">企业名称</div><div class="a inp" style="left:333px;top:274px"></div>
<div class="a lbl" style="left:562px;top:274px">注册号</div><div class="a inp" style="left:619px;top:274px"></div>
<div class="a lbl" style="left:848px;top:274px">统一社会信用代码</div><div class="a inp" style="left:975px;top:274px"></div>
<div class="a lbl" style="left:1204px;top:274px">成立日期</div><div class="a inp" style="left:1275px;top:274px"></div>
<div class="a lbl" style="left:262px;top:318px">住所</div><div class="a inp" style="left:305px;top:318px"></div>
<div class="a lbl" style="left:534px;top:318px">属地监管工商所中文名称</div><div class="a inp" style="left:703px;top:318px"></div>
<div class="a lbl" style="left:932px;top:318px">信用分数</div><div class="a inp" style="left:1003px;top:318px"></div>
<div class="a lbl" style="left:1232px;top:318px">信用等级</div><div class="a inp" style="left:1303px;top:318px"></div>
<div class="a lbl" style="left:262px;top:362px">风险等级</div><div class="a inp" style="left:333px;top:362px"></div>
<div class="a lbl" style="left:562px;top:362px">县</div><div class="a inp" style="left:591px;top:362px"></div>
<div class="a lbl" style="left:820px;top:362px">登记状态(CA19)</div><div class="a inp" style="left:936px;top:362px"></div>
<div class="a lbl" style="left:1165px;top:362px">经营(驻在)期限至</div><div class="a inp" style="left:1288px;top:362px"></div>
<div class="a btn" style="left:247px;top:408px">查询</div>
<div class="a btn" style="left:325px;top:408px">返回</div>
<div class="a" style="left:247px;top:457px;width:1335px;height:1px;background:#eee"></div>
<div class="a" style="left:247px;top:478px;width:1320px;height:136px;border:1px solid #e6e6e6;background:#fff"></div>
<div class="a th" style="left:248px;width:81px;padding-left:0px">序号</div>
<div class="a td" style="left:248px;width:81px">1</div>
<div class="a th" style="left:329px;width:231px;padding-left:5px">企业名称<svg style="margin-left:10px;vertical-align:-3px" width="10" height="15" viewBox="0 0 10 14" preserveAspectRatio="none"><path d="M5 1.5 L9.5 6 H.5 Z M5 12.5 L9.5 8 H.5 Z" fill="#b2b2b2"/></svg></div>
<div class="a td" style="left:329px;width:231px">舞钢市汇隆商贸有限公司</div>
<div class="a th" style="left:560px;width:231px;padding-left:5px">注册号<svg style="margin-left:10px;vertical-align:-3px" width="10" height="15" viewBox="0 0 10 14" preserveAspectRatio="none"><path d="M5 1.5 L9.5 6 H.5 Z M5 12.5 L9.5 8 H.5 Z" fill="#b2b2b2"/></svg></div>
<div class="a td" style="left:560px;width:231px">410481000010456</div>
<div class="a th" style="left:791px;width:231px;padding-left:5px">统一社会信用代码<svg style="margin-left:10px;vertical-align:-3px" width="10" height="15" viewBox="0 0 10 14" preserveAspectRatio="none"><path d="M5 1.5 L9.5 6 H.5 Z M5 12.5 L9.5 8 H.5 Z" fill="#b2b2b2"/></svg></div>
<div class="a td" style="left:791px;width:231px">91410481058764804L</div>
<div class="a th" style="left:1022px;width:231px;padding-left:5px">成立日期<svg style="margin-left:10px;vertical-align:-3px" width="10" height="15" viewBox="0 0 10 14" preserveAspectRatio="none"><path d="M5 1.5 L9.5 6 H.5 Z M5 12.5 L9.5 8 H.5 Z" fill="#b2b2b2"/></svg></div>
<div class="a td" style="left:1022px;width:231px">2012-11-27</div>
<div class="a th" style="left:1253px;width:33px;padding-left:0px"></div>
<div class="a td" style="left:1253px;width:33px"></div>
<div class="a" style="left:1272px;top:517px;height:38px;line-height:39px;width:13px;overflow:hidden;color:#666;font-size:14px">舞钢</div>
<div class="a" style="left:1285px;top:479px;width:281px;height:77px;box-shadow:-1px 0 8px rgba(0,0,0,.08);background:#fff"></div>
<div class="a th" style="left:1285px;width:281px;border-left:1px solid #e6e6e6;border-right:none">操作</div>
<div class="a td" style="left:1285px;width:281px;border-left:1px solid #e6e6e6;border-right:none"></div>
<div class="a xs" style="left:1373px;width:58px">结果查看</div>
<div class="a xs" style="left:1445px;width:34px">修改</div>
<div class="a" style="left:248px;top:557px;width:1318px;height:16px;background:#f1f1f1"></div>
<div class="a" style="left:265px;top:559px;width:395px;height:13px;background:#c1c1c1"></div>
<div class="a" style="left:254px;top:561px;width:0;height:0;border-top:4.5px solid transparent;border-bottom:4.5px solid transparent;border-right:5px solid #a3a3a3"></div>
<div class="a" style="left:1555px;top:561px;width:0;height:0;border-top:4.5px solid transparent;border-bottom:4.5px solid transparent;border-left:5px solid #404040"></div>
<div class="a" style="left:248px;top:573px;width:1318px;height:1px;background:#e6e6e6"></div>
<svg class="a" style="left:263px;top:587px" width="10" height="14" viewBox="0 0 10 14"><path d="M7.5 1.5 L2.5 7 L7.5 12.5" stroke="#d2d2d2" stroke-width="1.3" fill="none"/></svg>
<div class="a pg" style="left:287px;width:31px;background:#009688;color:#fff;text-align:center;border-radius:2px;font-weight:bold;font-size:13px">1</div>
<svg class="a" style="left:332px;top:587px" width="10" height="14" viewBox="0 0 10 14"><path d="M2.5 1.5 L7.5 7 L2.5 12.5" stroke="#d2d2d2" stroke-width="1.3" fill="none"/></svg>
<div class="a pg" style="left:356px;color:#999">到第</div>
<div class="a pg" style="left:390px;width:40px;border:1px solid #e2e2e2;border-radius:2px;text-align:center;line-height:25px;color:#555">1</div>
<div class="a pg" style="left:440px;color:#999">页</div>
<div class="a pg" style="left:462px;width:46px;border:1px solid #e2e2e2;border-radius:2px;text-align:center;line-height:25px;color:#333">确定</div>
<div class="a pg" style="left:518px;color:#444">共 1 条</div>
<div class="a pg" style="left:565px;width:77px;border:1px solid #e2e2e2;border-radius:2px;line-height:25px;padding-left:8px;color:#222">10 条/页<span style="position:absolute;right:5px;top:0;font-size:10.5px;color:#111">▼</span></div>
<div class="a" style="left:1567px;top:600px;width:29px;height:30px;background:#be9727"></div>
<svg class="a" style="left:1575px;top:607px" width="10" height="16" viewBox="0 0 10 16"><path d="M8 2 L2.5 8 L8 14" stroke="#fff" stroke-width="2.2" fill="none"/></svg><!--CARD-END-->
<!--FOOT-->
<div class="a" style="left:0;top:818px;width:1596px;height:11px;background:#fff"></div>
<div class="a" style="left:0;top:817px;width:1596px;height:1px;background:#557f93"></div>
<div class="a" style="left:0;top:819px;width:1596px;height:18px;line-height:18px;text-align:center;font-size:12px;color:#333">主办：河南省人民政府&nbsp;&nbsp;承办：河南省市场监督管理局&nbsp;&nbsp;承建：智容科技有限公司</div>
<div class="a" style="left:1580px;top:806px;width:40px;height:40px;border-radius:50%;background:radial-gradient(circle at 45% 40%,#8ee68f,#45c257);border:2px solid #2c8a3c;box-shadow:0 0 0 1.5px #eefaf0,0 0 0 2.5px #b5c9b8"></div>
<div class="a" style="left:1586px;top:817px;font-size:11px;font-weight:bold;color:#fff;height:14px;line-height:14px">31</div>
<!--FOOT-END-->
</body>
</html>
